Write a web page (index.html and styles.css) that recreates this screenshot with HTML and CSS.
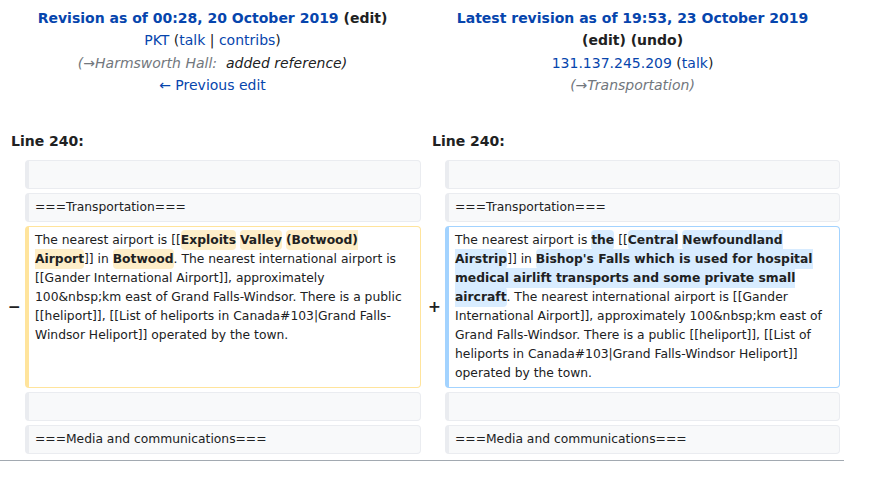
FILE: index.html
```html
<!DOCTYPE html>
<html lang="en">
<head>
<meta charset="utf-8">
<title>Diff</title>
<link rel="stylesheet" href="styles.css">
</head>
<body>
<table class="diff">
  <colgroup>
    <col class="col-marker-l">
    <col class="col-content-l">
    <col class="col-marker-r">
    <col class="col-content-r">
  </colgroup>
  <tr>
    <td colspan="2" class="title">
      <div class="title-main"><a class="link">Revision as of 00:28, 20 October 2019</a> <span class="tool">(edit)</span></div>
      <div><a class="link">PKT</a> (<a class="link">talk</a> | <a class="link">contribs</a>)</div>
      <div class="comment"><span class="auto">(→Harmsworth Hall:</span>&nbsp; added reference)</div>
      <div><a class="link">← Previous edit</a></div>
    </td>
    <td colspan="2" class="title">
      <div class="title-main"><a class="link">Latest revision as of 19:53, 23 October 2019</a> <span class="tool">(edit) (undo)</span></div>
      <div><a class="link">131.137.245.209</a> (<a class="link">talk</a>)</div>
      <div class="comment"><span class="auto">(→Transportation)</span></div>
    </td>
  </tr>
  <tr>
    <td colspan="2" class="lineno">Line 240:</td>
    <td colspan="2" class="lineno">Line 240:</td>
  </tr>
  <tr>
    <td class="marker"></td>
    <td class="cell context"><br></td>
    <td class="marker"></td>
    <td class="cell context"><br></td>
  </tr>
  <tr>
    <td class="marker"></td>
    <td class="cell context">===Transportation===</td>
    <td class="marker"></td>
    <td class="cell context">===Transportation===</td>
  </tr>
  <tr>
    <td class="marker">−</td>
    <td class="cell deleted">The nearest airport is [[<del class="chg">Exploits</del> <del class="chg">Valley</del> <del class="chg">(Botwood) Airport</del>]] in <del class="chg">Botwood</del>. The nearest international airport is [[Gander International Airport]], approximately 100&amp;nbsp;km east of Grand Falls-Windsor. There is a public [[heliport]], [[List of heliports in Canada#103|Grand Falls-Windsor Heliport]] operated by the town.</td>
    <td class="marker">+</td>
    <td class="cell added">The nearest airport is <ins class="chg">the</ins> [[<ins class="chg">Central</ins> <ins class="chg">Newfoundland Airstrip</ins>]] in <ins class="chg">Bishop's Falls which is used for hospital medical airlift transports and some private small aircraft</ins>. The nearest international airport is [[Gander International Airport]], approximately 100&amp;nbsp;km east of Grand Falls-Windsor. There is a public [[heliport]], [[List of heliports in Canada#103|Grand Falls-Windsor Heliport]] operated by the town.</td>
  </tr>
  <tr>
    <td class="marker"></td>
    <td class="cell context"><br></td>
    <td class="marker"></td>
    <td class="cell context"><br></td>
  </tr>
  <tr>
    <td class="marker"></td>
    <td class="cell context">===Media and communications===</td>
    <td class="marker"></td>
    <td class="cell context">===Media and communications===</td>
  </tr>
</table>
<div class="diff-hr"></div>
</body>
</html>
```
FILE: styles.css
```css
html, body {
  margin: 0;
  padding: 0;
  background: #ffffff;
}
body {
  font-family: "DejaVu Sans", sans-serif;
  color: #202122;
  font-size: 14px;
}
.diff {
  width: 844px;
  table-layout: fixed;
  border-collapse: separate;
  border-spacing: 4px;
  margin: 0;
}
.col-marker-l { width: 17px; }
.col-content-l { width: 396px; }
.col-marker-r { width: 16px; }
.col-content-r { width: 395px; }

.diff td {
  vertical-align: top;
}
.title {
  text-align: center;
  line-height: 22.4px;
  padding: 3px 7px 27px;
}
.title-main {
  font-weight: bold;
}
.link {
  color: #0645ad;
  text-decoration: none;
}
.tool {
  color: #202122;
  white-space: nowrap;
}
.comment {
  font-style: italic;
  color: #202122;
}
.auto {
  color: #72777d;
}
.lineno {
  font-weight: bold;
  line-height: 22.4px;
  padding: 2px 7px 4px;
}
.marker {
  padding: 0;
  text-align: right;
  font-weight: bold;
  font-size: 15.4px;
  line-height: 1.2;
  vertical-align: middle !important;
}
.cell {
  font-size: 12.32px;
  line-height: 19px;
  padding: 4px 6px;
  border: 1px solid #eaecf0;
  border-left-width: 4px;
  border-radius: 4px;
  overflow-wrap: break-word;
}
.context {
  background: #f8f9fa;
  border-color: #eaecf0;
}
.deleted {
  background: #ffffff;
  border-color: #ffe49c;
}
.added {
  background: #ffffff;
  border-color: #a3d3ff;
}
.chg {
  font-weight: bold;
  text-decoration: none;
  border-radius: 4px;
  padding: 3px 0;
}
.deleted .chg {
  background: #feeec8;
}
.added .chg {
  background: #d8ecff;
}
.diff-hr {
  width: 844px;
  height: 0;
  border-top: 1px solid #a2a9b1;
  margin-top: 2px;
}
```
